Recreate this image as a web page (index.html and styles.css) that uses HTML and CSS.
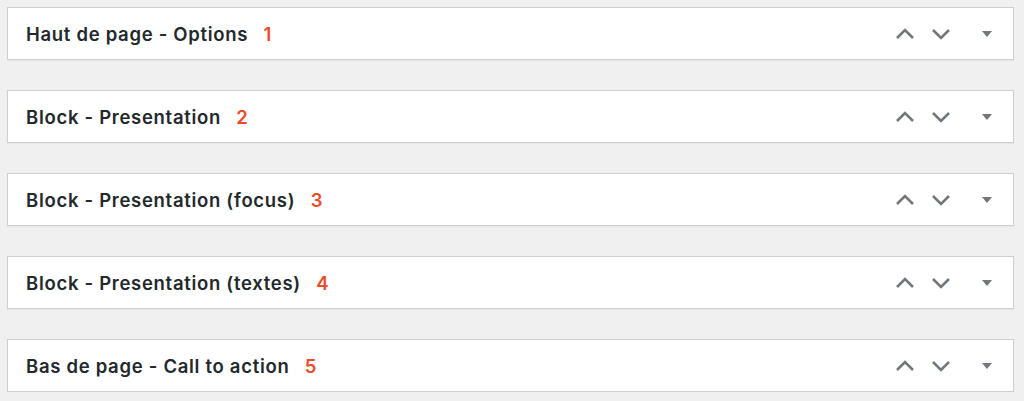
FILE: index.html
```html
<!DOCTYPE html>
<html lang="fr">

<head>
    <meta charset="UTF-8">
    <meta name="viewport" content="width=device-width, initial-scale=1.0">
    <title>Options</title>
    <link rel="stylesheet" href="styles.css">
</head>

<body>
    <div class="boxes">
        <div class="postbox">
            <h2 class="hndle">Haut de page - Options <span class="num">1</span></h2>
            <div class="actions">
                <svg class="chev" width="20" height="12" viewBox="0 0 20 12"><path d="M2 10 L10 2 L18 10"/></svg>
                <svg class="chev" width="20" height="12" viewBox="0 0 20 12"><path d="M2 2 L10 10 L18 2"/></svg>
                <svg class="tri" width="12" height="8" viewBox="0 0 12 8"><path d="M1 1 H11 L6 7 Z"/></svg>
            </div>
        </div>
        <div class="postbox">
            <h2 class="hndle">Block - Presentation <span class="num">2</span></h2>
            <div class="actions">
                <svg class="chev" width="20" height="12" viewBox="0 0 20 12"><path d="M2 10 L10 2 L18 10"/></svg>
                <svg class="chev" width="20" height="12" viewBox="0 0 20 12"><path d="M2 2 L10 10 L18 2"/></svg>
                <svg class="tri" width="12" height="8" viewBox="0 0 12 8"><path d="M1 1 H11 L6 7 Z"/></svg>
            </div>
        </div>
        <div class="postbox">
            <h2 class="hndle">Block - Presentation (focus) <span class="num">3</span></h2>
            <div class="actions">
                <svg class="chev" width="20" height="12" viewBox="0 0 20 12"><path d="M2 10 L10 2 L18 10"/></svg>
                <svg class="chev" width="20" height="12" viewBox="0 0 20 12"><path d="M2 2 L10 10 L18 2"/></svg>
                <svg class="tri" width="12" height="8" viewBox="0 0 12 8"><path d="M1 1 H11 L6 7 Z"/></svg>
            </div>
        </div>
        <div class="postbox">
            <h2 class="hndle">Block - Presentation (textes) <span class="num">4</span></h2>
            <div class="actions">
                <svg class="chev" width="20" height="12" viewBox="0 0 20 12"><path d="M2 10 L10 2 L18 10"/></svg>
                <svg class="chev" width="20" height="12" viewBox="0 0 20 12"><path d="M2 2 L10 10 L18 2"/></svg>
                <svg class="tri" width="12" height="8" viewBox="0 0 12 8"><path d="M1 1 H11 L6 7 Z"/></svg>
            </div>
        </div>
        <div class="postbox">
            <h2 class="hndle">Bas de page - Call to action <span class="num">5</span></h2>
            <div class="actions">
                <svg class="chev" width="20" height="12" viewBox="0 0 20 12"><path d="M2 10 L10 2 L18 10"/></svg>
                <svg class="chev" width="20" height="12" viewBox="0 0 20 12"><path d="M2 2 L10 10 L18 2"/></svg>
                <svg class="tri" width="12" height="8" viewBox="0 0 12 8"><path d="M1 1 H11 L6 7 Z"/></svg>
            </div>
        </div>
    </div>
</body>

</html>
```

FILE: styles.css
```css
body {
    margin: 0;
    background: #f0f0f1;
    font-family: "Inter", "Liberation Sans", sans-serif;
}

.boxes {
    padding: 7px 10px 0 7px;
    display: flex;
    flex-direction: column;
    gap: 30px;
}

.postbox {
    height: 51px;
    display: flex;
    align-items: center;
    justify-content: space-between;
    background: #fff;
    border: 1px solid #ccd0d4;
    box-shadow: 0 1px 1px rgba(0, 0, 0, 0.04);
}

.hndle {
    margin: 0 0 0 18px;
    font-size: 18.5px;
    font-weight: 600;
    letter-spacing: 0.7px;
    color: #23282d;
}

.num {
    margin-left: 10px;
    color: #ee4b2b;
}

.actions {
    display: flex;
    align-items: center;
    margin-right: 20px;
}

.chev {
    margin-right: 16px;
}

.chev path {
    fill: none;
    stroke: #72777c;
    stroke-width: 2.6;
}

.tri {
    margin-left: 14px;
}

.tri path {
    fill: #72777c;
}
```
